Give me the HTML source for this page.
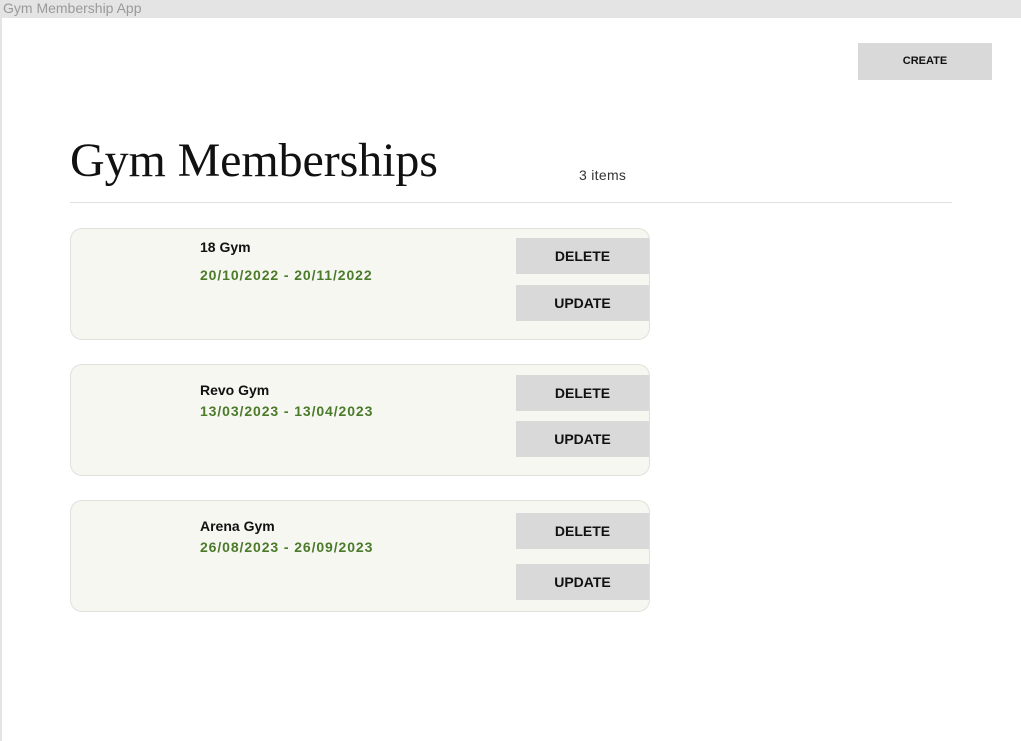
<!DOCTYPE html>
<html><head><style>
*{margin:0;padding:0;box-sizing:border-box}
body{width:1021px;height:741px;background:#e4e4e4;position:relative;overflow:hidden;font-family:"Liberation Sans",sans-serif}
.tb{position:absolute;left:3px;top:0;font-size:14px;color:#9a9a9a;line-height:17px}
.pg{position:absolute;left:2px;top:18px;width:1019px;height:723px;background:#fff}
.a{position:absolute}
.btn{position:absolute;background:#d9d9d9;font-weight:bold;font-size:14px;text-align:center;color:#111}
.card{position:absolute;left:70px;width:580px;height:112px;background:#f7f7f2;border:1px solid #e0e0dc;border-radius:12px}
.nm{position:absolute;left:200px;font-size:14px;font-weight:bold;color:#111}
.dt{position:absolute;left:200px;font-size:14px;font-weight:bold;color:#4a7a2a;letter-spacing:0.9px}
</style></head><body>
<div class="tb">Gym Membership App</div>
<div class="pg"></div>
<div class="btn" style="left:858px;top:43px;width:134px;height:37px;line-height:37px;font-size:11px">CREATE</div>
<div class="a" style="left:70px;top:133px;font-family:'Liberation Serif',serif;font-size:48px;color:#111;letter-spacing:-0.1px">Gym Memberships</div>
<div class="a" style="left:579px;top:167px;font-size:14px;color:#333;letter-spacing:0.3px">3 items</div>
<div class="a" style="left:70px;top:202px;width:882px;height:1px;background:#e0e0e0"></div>

<div class="card" style="top:228px"></div>
<div class="nm" style="top:239px">18 Gym</div>
<div class="dt" style="top:267px">20/10/2022 - 20/11/2022</div>
<div class="btn" style="left:516px;top:238px;width:133px;height:36px;line-height:36px">DELETE</div>
<div class="btn" style="left:516px;top:285px;width:133px;height:36px;line-height:36px">UPDATE</div>

<div class="card" style="top:364px"></div>
<div class="nm" style="top:382px">Revo Gym</div>
<div class="dt" style="top:403px">13/03/2023 - 13/04/2023</div>
<div class="btn" style="left:516px;top:375px;width:133px;height:36px;line-height:36px">DELETE</div>
<div class="btn" style="left:516px;top:421px;width:133px;height:36px;line-height:36px">UPDATE</div>

<div class="card" style="top:500px"></div>
<div class="nm" style="top:518px">Arena Gym</div>
<div class="dt" style="top:539px">26/08/2023 - 26/09/2023</div>
<div class="btn" style="left:516px;top:513px;width:133px;height:36px;line-height:36px">DELETE</div>
<div class="btn" style="left:516px;top:564px;width:133px;height:36px;line-height:36px">UPDATE</div>
</body></html>
